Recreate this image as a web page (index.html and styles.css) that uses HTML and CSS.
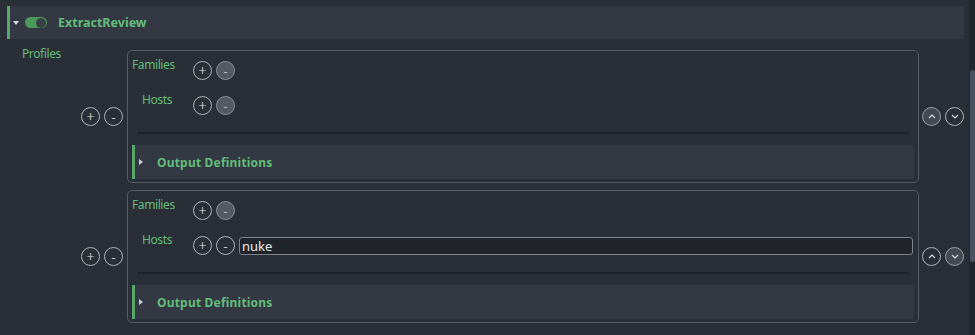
FILE: index.html
```html
<!DOCTYPE html>
<html>
<head>
<meta charset="utf-8">
<link rel="stylesheet" href="styles.css">
</head>
<body>
<div class="app">
  <div class="content">
    <div class="header">
      <span class="caret-down"></span>
      <span class="toggle"><span class="knob"></span></span>
      <span class="title">ExtractReview</span>
    </div>
    <div class="body">
      <div class="body-label">Profiles</div>
      <div class="list">
        <div class="item">
          <div class="btns">
            <span class="cbtn">+</span><span class="cbtn">-</span>
          </div>
          <div class="box">
            <div class="form">
              <div class="flabel">Families</div>
              <div class="fvalue"><span class="cbtn">+</span><span class="cbtn off">-</span></div>
              <div class="flabel">Hosts</div>
              <div class="fvalue"><span class="cbtn">+</span><span class="cbtn off">-</span></div>
            </div>
            <div class="divider"></div>
            <div class="section"><span class="caret-right"></span><span class="section-title">Output Definitions</span></div>
          </div>
          <div class="btns">
            <span class="cbtn off-arrow"><svg width="8" height="5" viewBox="0 0 8 5"><polyline points="1,4 4,1 7,4" class="chev"/></svg></span>
            <span class="cbtn"><svg width="8" height="5" viewBox="0 0 8 5"><polyline points="1,1 4,4 7,1" class="chev"/></svg></span>
          </div>
        </div>
        <div class="item">
          <div class="btns">
            <span class="cbtn">+</span><span class="cbtn">-</span>
          </div>
          <div class="box">
            <div class="form">
              <div class="flabel">Families</div>
              <div class="fvalue"><span class="cbtn">+</span><span class="cbtn off">-</span></div>
              <div class="flabel">Hosts</div>
              <div class="fvalue"><span class="cbtn">+</span><span class="cbtn">-</span><input class="text-input" type="text" value="nuke"></div>
            </div>
            <div class="divider"></div>
            <div class="section"><span class="caret-right"></span><span class="section-title">Output Definitions</span></div>
          </div>
          <div class="btns">
            <span class="cbtn"><svg width="8" height="5" viewBox="0 0 8 5"><polyline points="1,4 4,1 7,4" class="chev"/></svg></span>
            <span class="cbtn off-arrow"><svg width="8" height="5" viewBox="0 0 8 5"><polyline points="1,1 4,4 7,1" class="chev"/></svg></span>
          </div>
        </div>
      </div>
    </div>
  </div>
  <div class="scrollbar"><div class="handle"></div></div>
</div>
</body>
</html>
```
FILE: styles.css
```css
html, body {
  margin: 0;
  padding: 0;
  background: #2a2e36;
  overflow: hidden;
  font-family: "Noto Sans", "DejaVu Sans", sans-serif;
}
.app {
  display: flex;
  width: 975px;
  height: 335px;
}
.content {
  flex: 1;
  min-width: 0;
  padding: 6px 5px 0 7px;
}
.header {
  height: 33px;
  box-sizing: border-box;
  border-left: 3px solid #57a76a;
  background: #333842;
  display: flex;
  align-items: center;
  padding-left: 3px;
}
.caret-down {
  width: 0;
  height: 0;
  border-left: 3.5px solid transparent;
  border-right: 3.5px solid transparent;
  border-top: 4px solid #d6dbe1;
  margin-right: 6px;
}
.toggle {
  width: 22px;
  height: 11px;
  border-radius: 6px;
  background: #4c9a5b;
  display: flex;
  justify-content: flex-end;
  align-items: center;
}
.knob {
  width: 10px;
  height: 10px;
  border-radius: 50%;
  background: #3b4047;
  margin-right: 1px;
}
.title {
  margin-left: 11px;
  color: #62be7a;
  font-weight: 700;
  font-size: 12.5px;
}
.body {
  display: flex;
  padding: 7px 0 0 15px;
}
.body-label {
  width: 59px;
  flex: none;
  color: #62be7a;
  font-size: 12px;
  letter-spacing: -0.4px;
  line-height: 16px;
}
.list {
  flex: 1;
  display: flex;
  flex-direction: column;
  gap: 7px;
  padding-top: 4px;
}
.item {
  display: flex;
  align-items: center;
}
.btns {
  display: flex;
  gap: 4px;
  flex: none;
}
.box {
  flex: 1;
  min-width: 0;
  margin: 0 3px 0 4px;
  border: 1px solid #575c64;
  border-radius: 5px;
  padding: 5px 4px 3px 4px;
}
.form {
  display: grid;
  grid-template-columns: 61px 1fr;
  row-gap: 11px;
}
.flabel {
  text-align: right;
  padding-right: 21px;
  white-space: nowrap;
  font-size: 12px;
  letter-spacing: -0.4px;
  line-height: 17px;
  color: #62be7a;
}
.fvalue {
  padding-top: 5px;
  display: flex;
  gap: 4px;
  align-items: center;
}
.cbtn {
  width: 19px;
  height: 19px;
  box-sizing: border-box;
  border-radius: 50%;
  border: 1px solid #b1b5ba;
  color: #e4eaf0;
  font-size: 14px;
  font-weight: 300;
  line-height: 1;
  display: flex;
  align-items: center;
  justify-content: center;
  flex: none;
}
.cbtn.off {
  background: #555a62;
  border-color: #8d9197;
  color: #c8ccd1;
}
.cbtn.off-arrow {
  background: #454a52;
  border-color: #9a9ea4;
}
.chev {
  fill: none;
  stroke: #cfdceb;
  stroke-width: 1.2;
}
.text-input {
  flex: 1;
  min-width: 0;
  height: 18px;
  box-sizing: border-box;
  margin: 0 1px 0 0;
  border: 1px solid #7f838a;
  border-radius: 3px;
  background: #21252b;
  color: #e6e9ed;
  font-family: "Noto Sans", "DejaVu Sans", sans-serif;
  font-size: 13px;
  padding: 0 2px;
  outline: none;
}
.divider {
  margin: 17px 5px 0;
  height: 2px;
  background: #1f2328;
}
.section {
  margin-top: 11px;
  height: 34px;
  box-sizing: border-box;
  border-left: 3px solid #57a76a;
  background: #333842;
  display: flex;
  align-items: center;
  padding-left: 4px;
}
.caret-right {
  width: 0;
  height: 0;
  border-top: 3.5px solid transparent;
  border-bottom: 3.5px solid transparent;
  border-left: 4px solid #cdd2d8;
}
.section-title {
  margin-left: 14px;
  color: #62be7a;
  font-weight: 700;
  font-size: 12px;
  letter-spacing: 0.2px;
}
.scrollbar {
  width: 6px;
  flex: none;
  background: #22252b;
}
.handle {
  margin: 70px 0 0 1px;
  height: 192px;
  background: #4a5160;
  border-radius: 3px 3px 2px 2px;
}
```
